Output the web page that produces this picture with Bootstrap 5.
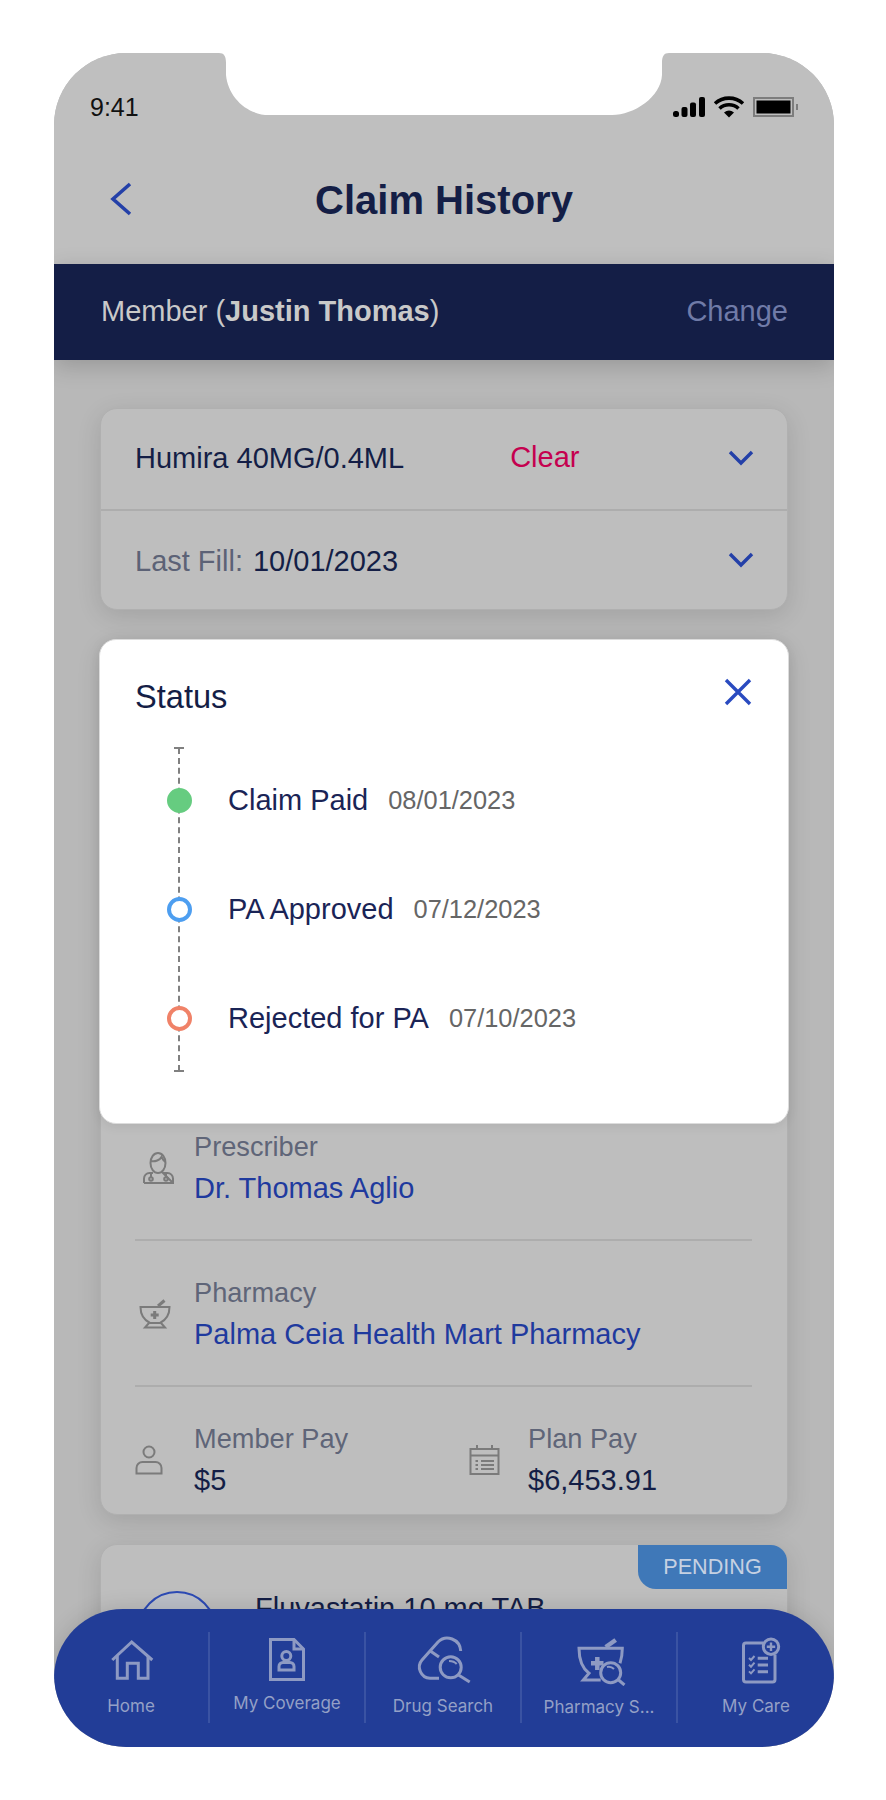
<!DOCTYPE html>
<html lang="en">
<head>
  <meta charset="UTF-8" />
  <meta name="viewport" content="width=device-width, initial-scale=1" />
  <title>Claim History</title>
  <link href="https://cdn.jsdelivr.net/npm/bootstrap@5.3.3/dist/css/bootstrap.min.css" rel="stylesheet">
  <style>
    body {
      font-family: "Liberation Sans", Arial, sans-serif;
      background: #fff;
      color: #141e46;
    }
    .phone {
      width: 780px;
      height: 1694px;
      margin: 53px 0 0 54px;
      background: #b8b8b8;
      border-radius: 72px;
      overflow: hidden;
      position: relative;
    }
    .notch { position: absolute; top: 0; left: 165px; }

    .status-row { height: 108px; padding: 0 35px 0 36px; background: #bfbfbf; }
    .status-time { font-size: 25px; line-height: 30px; color: #111; }
    .title-row { height: 103px; padding-bottom: 26px; background: #bfbfbf; }
    .title-side { width: 112px; padding-left: 56px; }
    .back-arrow { margin-top: -2px; }
    .page-title { font-size: 40px; font-weight: 700; line-height: 48px; margin: 0; color: #141e46; }

    .member-bar {
      height: 96px;
      padding: 0 46px 0 47px;
      background: #141e46;
      font-size: 29px;
      color: #c9c9c9;
      box-shadow: 0 6px 22px rgba(0, 0, 0, .18);
      position: relative;
    }
    .member-change { color: #707ba8; }

    .cards-wrap { padding: 48px 46px 0; }
    .claim-card {
      background: #bebebe;
      border: 1px solid #b0b0b0;
      border-radius: 17px;
      box-shadow: 0 6px 24px rgba(0, 0, 0, .12);
      font-size: 29px;
      line-height: 34px;
    }
    .filter-row { height: 100px; padding: 0 33px 0 34px; }
    .filter-first { padding-bottom: 2px; }
    .filter-row + .filter-row { border-top: 2px solid #adadad; }
    .fill-text { padding-top: 2px; }
    .clear-link { color: #c5004f; margin-left: 106px; position: relative; top: -1px; }
    .fill-label { color: #5c6276; margin-right: 10px; }

    .detail-card { margin-top: 30px; padding: 489px 35px 17px 34px; }
    .detail-row { padding-bottom: 34px; margin-bottom: 35px; border-bottom: 2px solid #adadad; }
    .detail-last { padding: 0; margin: 0; border: 0; }
    .icon-cell { width: 59px; flex: none; }
    .field-label { color: #5f6578; font-size: 27.2px; margin-bottom: 7px; }
    .field-link { color: #1f3a9e; }
    .pay-col { width: 334px; }

    .drug-card { margin-top: 29px; height: 300px; position: relative; padding: 46px 36px; }
    .drug-circle {
      width: 80px;
      height: 80px;
      flex: none;
      border: 2px solid #2c4ab5;
      border-radius: 50%;
      background: #bcc0c9;
      margin-right: 38px;
    }
    .pending-tag {
      position: absolute;
      top: 0;
      right: 0;
      width: 149px;
      height: 44px;
      background: #3f78b8;
      color: #c6d1e2;
      font-size: 21.6px;
      line-height: 43px;
      text-align: center;
      border-radius: 0 16px 0 18px;
    }

    .status-pop {
      position: absolute;
      top: 586px;
      left: 45px;
      width: 690px;
      height: 485px;
      background: #fff;
      border: 1px solid #dcdcdc;
      border-radius: 17px;
      padding: 37px 36px 0 35px;
      box-shadow: 0 2px 12px rgba(0, 0, 0, .08);
    }
    .pop-title { font-size: 32.6px; line-height: 40px; margin: 0; font-weight: 400; color: #141e46; }
    .pop-close { margin-top: 1px; }
    .timeline { position: relative; margin: 29px 0 0 37px; }
    .timeline::before {
      content: "";
      position: absolute;
      top: 2px;
      bottom: 2px;
      left: 6px;
      border-left: 2px dashed #808080;
    }
    .timeline::after {
      content: "";
      position: absolute;
      top: 1px;
      bottom: 1px;
      left: 2px;
      width: 10px;
      border-top: 2px solid #808080;
      border-bottom: 2px solid #808080;
    }
    .step { height: 109px; font-size: 29px; position: relative; z-index: 1; }
    .step-dot {
      width: 25px;
      height: 25px;
      flex: none;
      margin-left: -5px;
      margin-right: 36px;
      border-radius: 50%;
      background: #fff;
      border: 4px solid;
    }
    .dot-green { background: #66cc80; border-color: #66cc80; }
    .dot-blue { border-color: #4d9ef0; }
    .dot-salmon { border-color: #f08268; }
    .step-name { color: #1a2456; margin-right: 20px; }
    .step-date { color: #666; font-size: 25.4px; }

    .tab-bar {
      position: absolute;
      left: 0;
      right: 0;
      bottom: 0;
      height: 138px;
      padding-top: 23px;
      background: #223d97;
      border-radius: 69px;
      box-shadow: 0 0 22px rgba(0, 0, 0, .14);
    }
    .tab-item {
      width: 156px;
      height: 91px;
      border-right: 2px solid #3a53a3;
      font-family: Inter, "Liberation Sans", sans-serif;
      font-size: 17px;
      line-height: 22px;
      color: #94a0c6;
      white-space: nowrap;
    }
    .tab-item:last-child { border-right: 0; }
    .tab-item svg { margin-top: 2px; margin-bottom: 9px; }
    .tab-raise { position: relative; top: -3px; }
    .tab-drop { position: relative; top: 1px; }
    .ico-tab { fill: none; stroke: #8e9ac3; stroke-width: 3; }
    .ico-grey { fill: none; stroke: #7b7b7b; stroke-width: 2; }
  </style>
</head>
<body>
  <div class="phone">
    <div class="status-row d-flex justify-content-between align-items-center">
      <span class="status-time">9:41</span>
      <div class="d-flex align-items-center">
        <svg width="127" height="22" viewBox="0 0 127 22">
          <rect x="1" y="15" width="6" height="6" rx="2.5" fill="#000"/>
          <rect x="9.5" y="11" width="6" height="10" rx="2" fill="#000"/>
          <rect x="18" y="6.5" width="6" height="14.5" rx="2" fill="#000"/>
          <rect x="27" y="1" width="6" height="20" rx="2" fill="#000"/>
          <path d="M43 7.5 A21 21 0 0 1 71 7.5 M47.5 12.5 A14 14 0 0 1 66.5 12.5" fill="none" stroke="#000" stroke-width="3.6"/>
          <path d="M52 16.5 A8 8 0 0 1 62 16.5 L57 21.5 Z" fill="#000"/>
          <rect x="82" y="2" width="39" height="18" fill="none" stroke="#7d7d7d" stroke-width="2"/>
          <rect x="84.5" y="4.5" width="34" height="13" fill="#000"/>
          <rect x="124" y="8" width="2" height="6" fill="#7d7d7d"/>
        </svg>
      </div>
    </div>

    <div class="title-row d-flex align-items-center">
      <div class="title-side">
        <svg class="d-block back-arrow" width="22" height="34" viewBox="0 0 22 34"><path d="M20 2 L3 17 L20 32" fill="none" stroke="#2440a8" stroke-width="3.6"/></svg>
      </div>
      <h1 class="page-title flex-grow-1 text-center">Claim History</h1>
      <div class="title-side"></div>
    </div>

    <div class="member-bar d-flex justify-content-between align-items-center">
      <span>Member (<b>Justin Thomas</b>)</span>
      <span class="member-change">Change</span>
    </div>

    <div class="cards-wrap">
      <div class="claim-card">
        <div class="filter-row filter-first d-flex align-items-center">
          <span>Humira 40MG/0.4ML</span>
          <span class="clear-link">Clear</span>
          <svg class="ms-auto" width="26" height="16" viewBox="0 0 26 16"><path d="M2 2 L13 13 L24 2" fill="none" stroke="#2440a8" stroke-width="3.4"/></svg>
        </div>
        <div class="filter-row d-flex align-items-center">
          <div class="fill-text">
            <span class="fill-label">Last Fill:</span><span>10/01/2023</span>
          </div>
          <svg class="ms-auto" width="26" height="16" viewBox="0 0 26 16"><path d="M2 2 L13 13 L24 2" fill="none" stroke="#2440a8" stroke-width="3.4"/></svg>
        </div>
      </div>

      <div class="claim-card detail-card">
        <div class="detail-row d-flex align-items-center">
          <div class="icon-cell">
            <svg class="d-block ms-2" width="31" height="32" viewBox="0 0 31 32">
              <g class="ico-grey">
                <ellipse cx="15" cy="11" rx="7.5" ry="10"/>
                <path d="M8 9 C12 10 17 8 18.500 5 C19.500 7 21 9 22.500 10"/>
                <path d="M1 31 V26.500 A5.500 5.500 0 0 1 6.500 21 H10 M20 21 H24.500 A5.500 5.500 0 0 1 30 26.500 V31 Z"/>
                <path d="M1 31 H30 M8 21.500 V25 M23 21.500 V25"/>
                <circle cx="8" cy="27" r="1.800"/>
                <circle cx="23" cy="27" r="1.800"/>
              </g>
            </svg>
          </div>
          <div>
            <div class="field-label">Prescriber</div>
            <div class="field-link">Dr. Thomas Aglio</div>
          </div>
        </div>
        <div class="detail-row d-flex align-items-center">
          <div class="icon-cell">
            <svg class="d-block ms-1" width="33" height="30" viewBox="0 0 33 30">
              <g class="ico-grey">
                <path d="M1.500 8 H30.500 C30.500 15 27 21 21 24 H11 C5 21 1.500 15 1.500 8 Z"/>
                <path d="M10 24 L6 28.500 H26 L22 24"/>
                <path d="M19 7 L25.500 1.500" stroke-width="3"/>
                <path d="M15.700 12 V20 M11.700 16 H19.700" stroke-width="3"/>
              </g>
            </svg>
          </div>
          <div>
            <div class="field-label">Pharmacy</div>
            <div class="field-link">Palma Ceia Health Mart Pharmacy</div>
          </div>
        </div>
        <div class="detail-row detail-last d-flex align-items-center">
          <div class="pay-col d-flex align-items-center">
            <div class="icon-cell">
              <svg class="d-block" width="29" height="30" viewBox="0 0 29 30">
                <g class="ico-grey">
                  <circle cx="14" cy="7" r="5.500"/>
                  <path d="M1.500 28.500 V23 A6 6 0 0 1 7.500 17 H20.500 A6 6 0 0 1 26.500 23 V28.500 Z"/>
                </g>
              </svg>
            </div>
            <div>
              <div class="field-label">Member Pay</div>
              <div>$5</div>
            </div>
          </div>
          <div class="d-flex align-items-center">
            <div class="icon-cell">
              <svg class="d-block" width="31" height="31" viewBox="0 0 31 31">
                <g class="ico-grey">
                  <rect x="1.500" y="5" width="28" height="25"/>
                  <path d="M1.500 11.500 H29.500 M8 1 V5 M23 1 V5"/>
                  <path d="M6.500 17 H9 M12 17 H25 M6.500 21 H9 M12 21 H25 M6.500 25 H9 M12 25 H25"/>
                </g>
              </svg>
            </div>
            <div>
              <div class="field-label">Plan Pay</div>
              <div>$6,453.91</div>
            </div>
          </div>
        </div>
      </div>

      <div class="claim-card drug-card d-flex align-items-start">
        <span class="pending-tag">PENDING</span>
        <div class="drug-circle"></div>
        <div>Fluvastatin 10 mg TAB</div>
      </div>
    </div>

    <svg class="notch" width="450" height="63" viewBox="0 0 450 63">
      <path d="M0 0 C5 0 7 3 7 10 V22 C9 44 28 62 50 62 H393 C415 62 442 44 443 22 V10 C443 3 445 0 450 0 Z" fill="#fff"/>
    </svg>

    <div class="status-pop">
      <div class="d-flex justify-content-between align-items-start">
        <h2 class="pop-title">Status</h2>
        <svg class="pop-close" width="28" height="28" viewBox="0 0 28 28"><path d="M2 2 L26 26 M26 2 L2 26" fill="none" stroke="#2a4bc0" stroke-width="3.4"/></svg>
      </div>
      <div class="timeline">
        <div class="step d-flex align-items-center">
          <span class="step-dot dot-green"></span>
          <span class="step-name">Claim Paid</span>
          <span class="step-date">08/01/2023</span>
        </div>
        <div class="step d-flex align-items-center">
          <span class="step-dot dot-blue"></span>
          <span class="step-name">PA Approved</span>
          <span class="step-date">07/12/2023</span>
        </div>
        <div class="step d-flex align-items-center">
          <span class="step-dot dot-salmon"></span>
          <span class="step-name">Rejected for PA</span>
          <span class="step-date">07/10/2023</span>
        </div>
      </div>
    </div>

    <nav class="tab-bar d-flex">
      <div class="tab-item d-flex flex-column align-items-center">
        <svg width="60" height="52" viewBox="0 0 60 52"><g class="ico-tab"><path d="M11.300 26 L30.700 8 L51.300 26"/><path d="M16.300 22 V44.300 H26.300 V29.300 H37.300 V44.300 H47 V22"/></g></svg>
        <span>Home</span>
      </div>
      <div class="tab-item d-flex flex-column align-items-center">
        <svg width="60" height="52" viewBox="0 0 60 52"><g class="ico-tab"><path d="M13.500 5.500 H37 L46.500 15 V45.500 H13.500 Z"/><path d="M37 5.500 V15 H46.500"/><circle cx="29.300" cy="22" r="4.500"/><path d="M22 36 V32.500 A4 4 0 0 1 26 28.500 H33 A4 4 0 0 1 37 32.500 V36 Z"/></g></svg>
        <span class="tab-raise">My Coverage</span>
      </div>
      <div class="tab-item d-flex flex-column align-items-center">
        <svg width="60" height="52" viewBox="0 0 60 52"><g class="ico-tab"><path d="M26 44.300 H17 C8 44 3 33 9 26 L25 8 C33 0 47 5 47.700 17"/><path d="M17 16.700 L26 23"/><circle cx="37.700" cy="33.300" r="10.500"/><path d="M45.500 41 L56.700 48"/><path d="M36 27 C39 27 42 28 43.700 30" stroke-width="2"/></g></svg>
        <span>Drug Search</span>
      </div>
      <div class="tab-item d-flex flex-column align-items-center">
        <svg width="60" height="52" viewBox="0 0 60 52"><g class="ico-tab"><path d="M31.700 46 H14.300 L20 39.300 C13 34 10 26 10 14.300 H53.300 C53.300 20 52.500 25 51 29.300"/><path d="M36.700 13 L46.700 6" stroke-width="4.500"/><path d="M28.300 23 V36 M22 29.300 H34.500" stroke-width="4.500"/><circle cx="41.700" cy="38.700" r="10"/><path d="M49 45.500 L55.500 51"/><path d="M38 33 C40 32.500 43 33 45 35" stroke-width="2"/></g></svg>
        <span class="tab-drop">Pharmacy S...</span>
      </div>
      <div class="tab-item d-flex flex-column align-items-center">
        <svg width="60" height="52" viewBox="0 0 60 52"><g class="ico-tab"><path d="M37.500 9 H20 A2.500 2.500 0 0 0 17.500 11.500 V45.500 A2.500 2.500 0 0 0 20 48 H46.500 A2.500 2.500 0 0 0 49 45.500 V20.500"/><circle cx="45" cy="12.700" r="7.700"/><path d="M45 8.500 V17 M40.800 12.700 H49.200" stroke-width="2.400"/><path d="M31.700 24.300 H42 M31.700 31 H42 M31.700 37.700 H42"/><path d="M23 24 L25 26 L28.500 22 M23 30.700 L25 32.700 L28.500 28.700 M23 37.400 L25 39.400 L28.500 35.400" stroke-width="2"/></g></svg>
        <span>My Care</span>
      </div>
    </nav>
  </div>

  <script src="https://cdn.jsdelivr.net/npm/bootstrap@5.3.3/dist/js/bootstrap.bundle.min.js"></script>
</body>
</html>
